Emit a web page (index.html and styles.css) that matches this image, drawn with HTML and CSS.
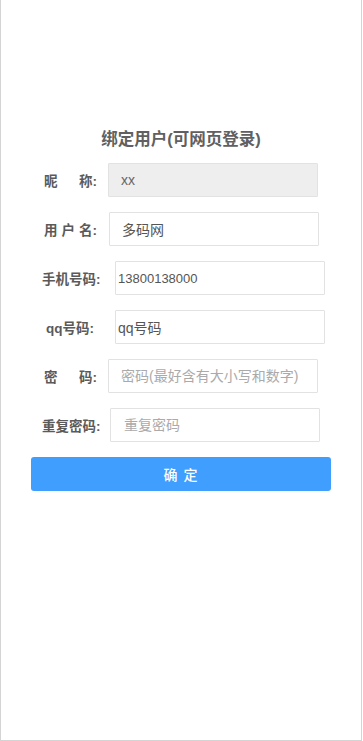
FILE: index.html
```html
<!DOCTYPE html>
<html lang="zh-CN">
<head>
<meta charset="utf-8">
<title>绑定用户</title>
<link rel="stylesheet" href="styles.css">
</head>
<body>
<div class="page">
  <h1 class="title">绑定用户(可网页登录)</h1>
  <form class="form">
    <div class="row r1">
      <label class="lbl w53"><span>昵</span><span>称:</span></label>
      <input class="inp disabled" value="xx" readonly>
    </div>
    <div class="row r2">
      <label class="lbl w53"><span>用</span><span>户</span><span>名:</span></label>
      <input class="inp" value="多码网">
    </div>
    <div class="row r3">
      <label class="lbl w59">手机号码:</label>
      <input class="inp tight num" value="13800138000">
    </div>
    <div class="row r4">
      <label class="lbl w49">qq号码:</label>
      <input class="inp tight" value="qq号码">
    </div>
    <div class="row r5">
      <label class="lbl w53"><span>密</span><span>码:</span></label>
      <input class="inp" type="password" placeholder="密码(最好含有大小写和数字)">
    </div>
    <div class="row r6">
      <label class="lbl w59">重复密码:</label>
      <input class="inp wide-pad" type="password" placeholder="重复密码">
    </div>
    <button type="button" class="btn">确 定</button>
  </form>
</div>
</body>
</html>
```
FILE: styles.css
```css
* { box-sizing: border-box; }
html, body { margin: 0; padding: 0; background: #fff; }
body {
  font-family: "Liberation Sans", "Noto Sans CJK SC", sans-serif;
  color: #555;
}
.page {
  width: 362px;
  height: 741px;
  border: 1px solid #d4d4d4;
  border-top: none;
  padding-top: 127px;
}
.title {
  margin: 0;
  height: 24px;
  line-height: 24px;
  font-size: 16.5px;
  font-weight: bold;
  text-align: center;
  color: #606060;
}
.form {
  margin-top: 12px;
  display: flex;
  flex-direction: column;
}
.row {
  display: flex;
  align-items: center;
  height: 34px;
  margin-bottom: 15px;
}
.lbl {
  display: flex;
  justify-content: space-between;
  font-size: 13.5px;
  font-weight: bold;
  color: #5a5a5a;
  white-space: nowrap;
}
.w53 { width: 53px; }
.w59 { width: 59px; }
.w49 { width: 49px; }
.inp {
  width: 210px;
  height: 34px;
  border: 1px solid #e2e2e2;
  border-radius: 1px;
  background: #fff;
  padding: 0 0 0 12px;
  font-family: "Liberation Sans", "Noto Sans CJK SC", sans-serif;
  font-size: 14px;
  color: #555;
  outline: none;
}
.inp::placeholder { color: #aaa; }
.inp.disabled { background: #eeeeee; color: #666; }
.inp.tight { padding-left: 2px; }
.inp.num { font-size: 13px; }
.inp.wide-pad { padding-left: 13px; }
.r1 { padding-left: 43px; }
.r1 .inp { margin-left: 11px; }
.r2 { padding-left: 43px; }
.r2 .inp { margin-left: 12px; }
.r3 { padding-left: 41px; }
.r3 .inp { margin-left: 14px; }
.r4 { padding-left: 45px; }
.r4 .inp { margin-left: 20px; }
.r5 { padding-left: 43px; }
.r5 .inp { margin-left: 11px; }
.r6 { padding-left: 41px; }
.r6 .inp { margin-left: 9px; }
.btn {
  margin: 0 0 0 30px;
  width: 300px;
  height: 34px;
  border: none;
  border-radius: 3px;
  background: #409eff;
  color: #fff;
  font-family: "Liberation Sans", "Noto Sans CJK SC", sans-serif;
  font-size: 14px;
  font-weight: 500;
  letter-spacing: 1px;
  cursor: pointer;
}
```
